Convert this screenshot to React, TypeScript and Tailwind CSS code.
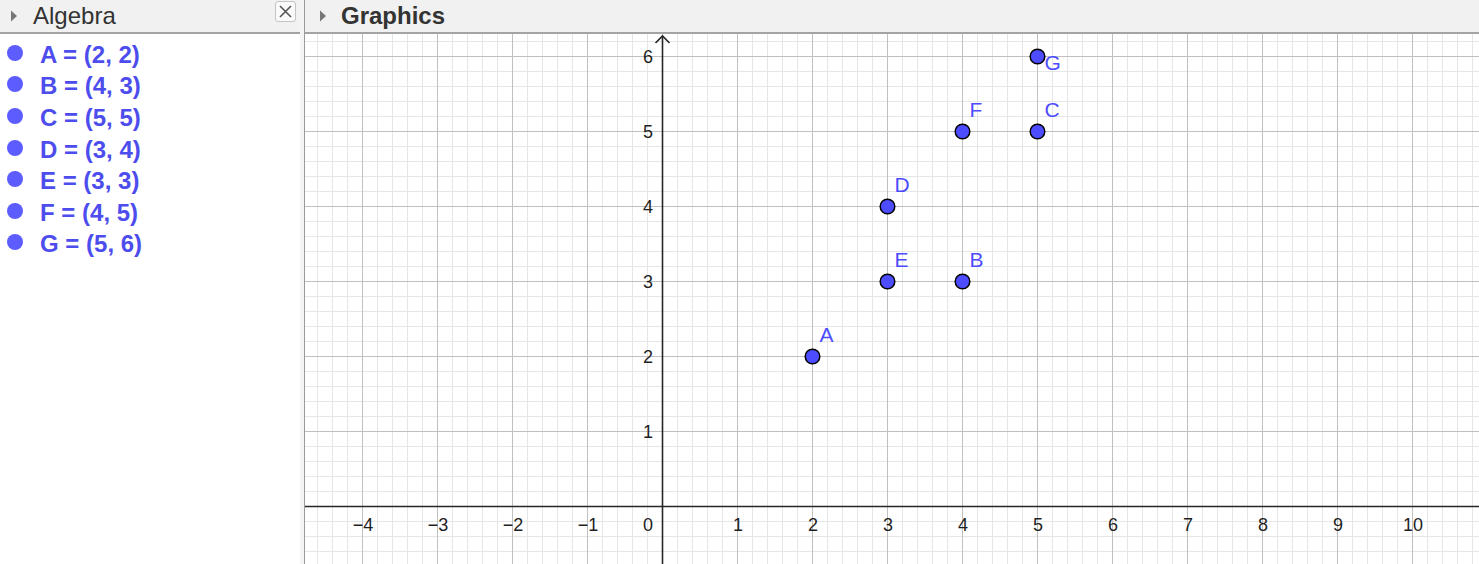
import React from 'react';

const POINT_COLOR = '#4d4dff';
const UNIT = 75;
const MINOR = 15;
const CANVAS_W = 1174;
const CANVAS_H = 530;
const ORIGIN_X = 357;
const ORIGIN_Y = 472;

const points = [
  { name: 'A', x: 2, y: 2 },
  { name: 'B', x: 4, y: 3 },
  { name: 'C', x: 5, y: 5 },
  { name: 'D', x: 3, y: 4 },
  { name: 'E', x: 3, y: 3 },
  { name: 'F', x: 4, y: 5 },
  { name: 'G', x: 5, y: 6 },
];

const range = (from: number, to: number) => {
  const out: number[] = [];
  for (let i = from; i <= to; i++) out.push(i);
  return out;
};

const sx = (x: number) => ORIGIN_X + x * UNIT;
const sy = (y: number) => ORIGIN_Y - y * UNIT;

function Triangle() {
  return (
    <svg width="8" height="14" viewBox="0 0 8 14" className="shrink-0">
      <path d="M1 1.5 L7 7 L1 12.5 Z" fill="#777777" />
    </svg>
  );
}

function AlgebraView() {
  return (
    <div className="flex h-full w-[300px] shrink-0 flex-col bg-white">
      <div className="flex h-[34px] shrink-0 items-center border-b-2 border-[#a3a3a3] bg-[#f1f1f1] pl-[10px] pr-[4px]">
        <Triangle />
        <span className="ml-[15px] text-[24px] leading-none text-[#333333]">
          Algebra
        </span>
        <button className="ml-auto mb-[9px] flex h-[21px] w-[21px] items-center justify-center rounded-[3px] border border-[#c4c4c4] bg-[#fafafa]">
          <svg width="15" height="15" viewBox="0 0 15 15">
            <path
              d="M2 2 L13 13 M13 2 L2 13"
              stroke="#555"
              strokeWidth="1.6"
            />
          </svg>
        </button>
      </div>
      <div className="pt-[5px]">
        {points.map((p) => (
          <div key={p.name} className="flex h-[31.6px] items-center">
            <span className="ml-[7px] -mt-[4px] h-[16px] w-[16px] rounded-full bg-[#5c5cff]" />
            <span className="ml-[17px] text-[24px] font-bold leading-none text-[#4d4dee]">
              {p.name} = ({p.x}, {p.y})
            </span>
          </div>
        ))}
      </div>
    </div>
  );
}

function Grid() {
  const minorX = range(-23, 54).filter((k) => k % 5 !== 0);
  const minorY = range(-3, 31).filter((k) => k % 5 !== 0);
  const majorX = range(-4, 10);
  const majorY = range(-1, 6);

  return (
    <g shapeRendering="crispEdges">
      {minorX.map((k) => (
        <line
          key={`mx${k}`}
          x1={ORIGIN_X + k * MINOR + 0.5}
          x2={ORIGIN_X + k * MINOR + 0.5}
          y1={0}
          y2={CANVAS_H}
          stroke="#e6e6e6"
        />
      ))}
      {minorY.map((k) => (
        <line
          key={`my${k}`}
          y1={ORIGIN_Y - k * MINOR + 0.5}
          y2={ORIGIN_Y - k * MINOR + 0.5}
          x1={0}
          x2={CANVAS_W}
          stroke="#e6e6e6"
        />
      ))}
      {majorX.map((k) => (
        <line
          key={`Mx${k}`}
          x1={sx(k) + 0.5}
          x2={sx(k) + 0.5}
          y1={0}
          y2={CANVAS_H}
          stroke="#c0c0c0"
        />
      ))}
      {majorY.map((k) => (
        <line
          key={`My${k}`}
          y1={sy(k) + 0.5}
          y2={sy(k) + 0.5}
          x1={0}
          x2={CANVAS_W}
          stroke="#c0c0c0"
        />
      ))}
    </g>
  );
}

function Axes() {
  const xTicks = range(-4, 10).filter((k) => k !== 0);
  const yTicks = range(1, 6);
  const labelFont = {
    fontFamily: '"Liberation Sans", Arial, sans-serif',
    fontSize: 18,
    fill: '#1f1f1f',
  };

  return (
    <g>
      <line
        x1={0}
        x2={CANVAS_W}
        y1={ORIGIN_Y + 0.5}
        y2={ORIGIN_Y + 0.5}
        stroke="#262626"
        strokeWidth="1.6"
      />
      <line
        x1={ORIGIN_X + 0.5}
        x2={ORIGIN_X + 0.5}
        y1={2}
        y2={CANVAS_H}
        stroke="#262626"
        strokeWidth="1.6"
      />
      <path
        d={`M${ORIGIN_X - 6.5} 9 L${ORIGIN_X + 0.5} 2 L${ORIGIN_X + 7.5} 9`}
        fill="none"
        stroke="#262626"
        strokeWidth="1.6"
      />
      {xTicks.map((k) => (
        <text
          key={`xl${k}`}
          x={sx(k) + 1}
          y={ORIGIN_Y + 25}
          textAnchor="middle"
          {...labelFont}
        >
          {k < 0 ? `\u2212${-k}` : k}
        </text>
      ))}
      {yTicks.map((k) => (
        <text
          key={`yl${k}`}
          x={ORIGIN_X - 9}
          y={sy(k) + 7}
          textAnchor="end"
          {...labelFont}
        >
          {k}
        </text>
      ))}
      <text x={ORIGIN_X - 9} y={ORIGIN_Y + 25} textAnchor="end" {...labelFont}>
        0
      </text>
    </g>
  );
}

function Points() {
  return (
    <g>
      {points.map((p) => {
        const cx = sx(p.x) + 0.5;
        const cy = sy(p.y) + 0.5;
        const below = p.name === 'G';
        return (
          <g key={p.name}>
            <circle
              cx={cx}
              cy={cy}
              r={7.3}
              fill={POINT_COLOR}
              stroke="#000"
              strokeWidth="1.5"
            />
            <text
              x={cx + 7}
              y={below ? cy + 13 : cy - 15}
              fill={POINT_COLOR}
              fontFamily='"Liberation Sans", Arial, sans-serif'
              fontSize={21}
            >
              {p.name}
            </text>
          </g>
        );
      })}
    </g>
  );
}

function GraphicsView() {
  return (
    <div className="flex h-full min-w-0 flex-1 flex-col">
      <div className="flex h-[34px] shrink-0 items-center border-b-2 border-[#a3a3a3] bg-[#f1f1f1] pl-[14px]">
        <Triangle />
        <span className="ml-[14px] text-[24px] font-bold leading-none text-[#333333]">
          Graphics
        </span>
      </div>
      <div className="flex-1 overflow-hidden bg-white">
        <svg width={CANVAS_W} height={CANVAS_H} className="block">
          <Grid />
          <Axes />
          <Points />
        </svg>
      </div>
    </div>
  );
}

export default function App() {
  return (
    <div className="flex h-[564px] w-[1479px] overflow-hidden bg-white font-['Liberation_Sans',Arial,sans-serif]">
      <AlgebraView />
      <div className="h-full w-[4px] shrink-0 bg-[#f4f4f4]" />
      <div className="h-full w-px shrink-0 bg-[#9a9a9a]" />
      <GraphicsView />
    </div>
  );
}
